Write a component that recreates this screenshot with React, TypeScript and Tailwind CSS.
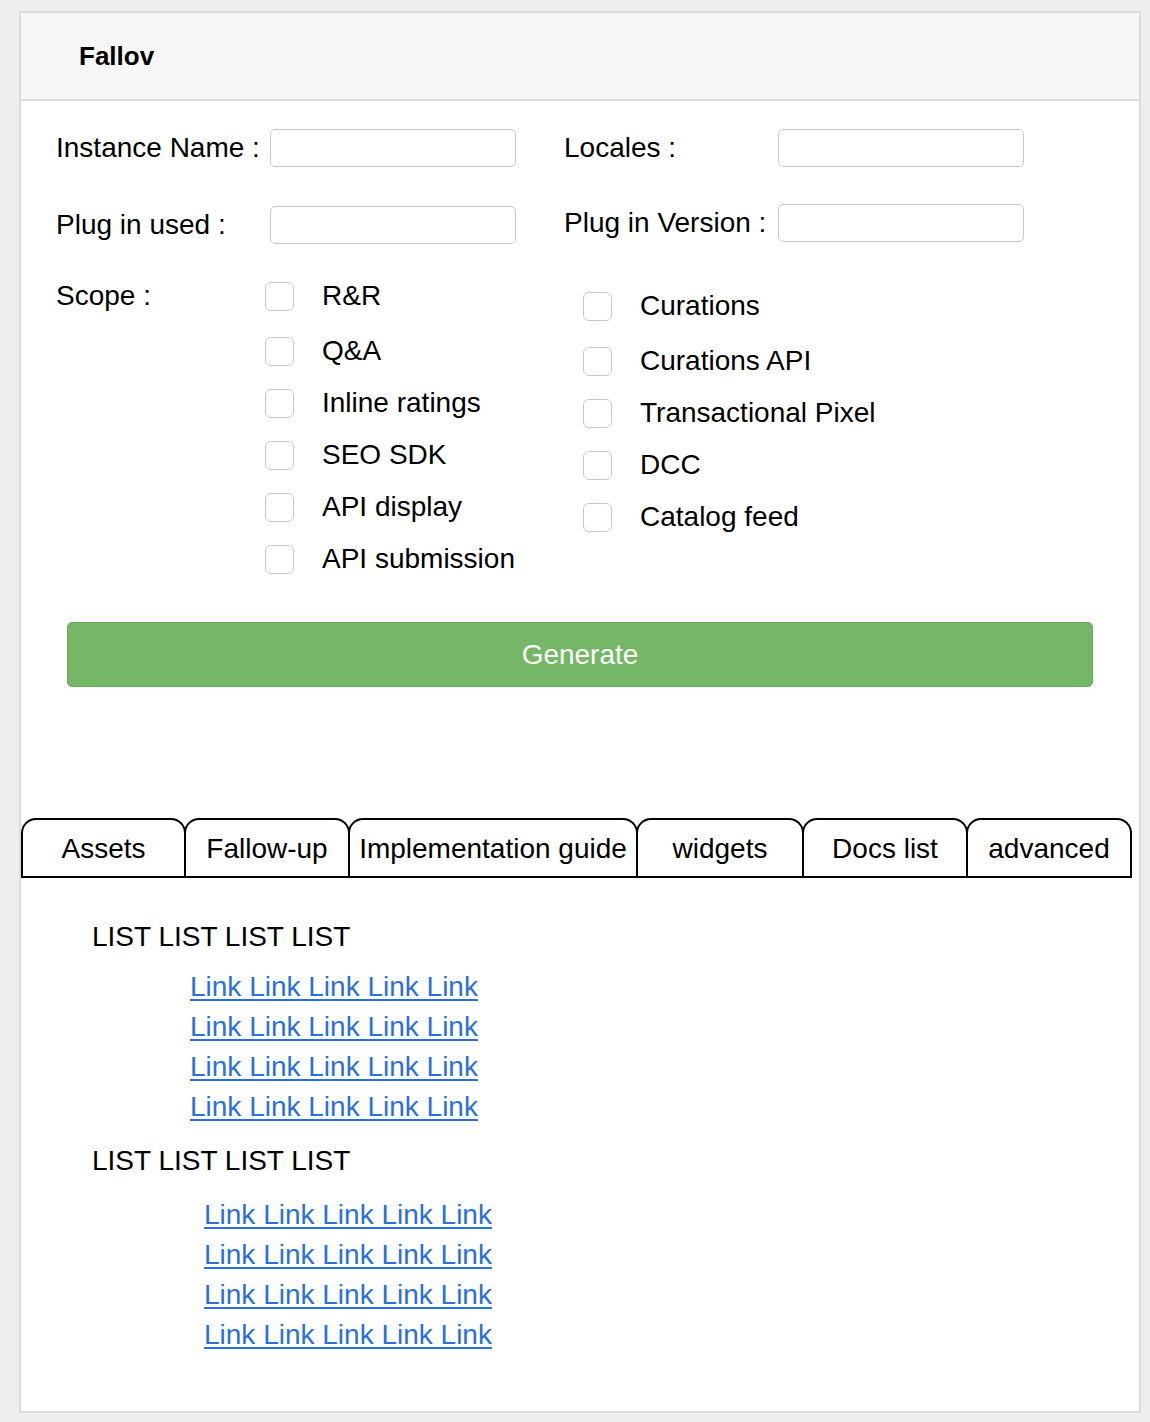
import React from 'react';

const leftScope = ['R&R', 'Q&A', 'Inline ratings', 'SEO SDK', 'API display', 'API submission'];
const rightScope = ['Curations', 'Curations API', 'Transactional Pixel', 'DCC', 'Catalog feed'];

const tabs = [
    { label: 'Assets', w: 'w-[165px]' },
    { label: 'Fallow-up', w: 'w-[166px]' },
    { label: 'Implementation guide', w: 'w-[290px]' },
    { label: 'widgets', w: 'w-[168px]' },
    { label: 'Docs list', w: 'w-[166px]' },
    { label: 'advanced', w: 'w-[166px]' },
];

const links = ['Link Link Link Link Link', 'Link Link Link Link Link', 'Link Link Link Link Link', 'Link Link Link Link Link'];

const Field: React.FC<{ label: string }> = ({ label }) => (
    <div className="flex items-center h-[38px]">
        <label className="w-[214px] whitespace-nowrap leading-none">{label}</label>
        <input type="text" className="w-[246px] h-[38px] border border-[#c8c8c8] rounded-[5px] bg-white outline-none" />
    </div>
);

const Check: React.FC<{ label: string; first?: boolean }> = ({ label, first }) => (
    <label className={`flex items-center h-[52px] ${first ? 'mb-[3px]' : ''}`}>
        <input type="checkbox" className="appearance-none w-[29px] h-[29px] border border-[#c8c8c8] rounded-[6px] bg-white shrink-0" />
        <span className="ml-[28px] whitespace-nowrap leading-none">{label}</span>
    </label>
);

const LinkList: React.FC<{ indent: string }> = ({ indent }) => (
    <ul className={`flex flex-col ${indent}`}>
        {links.map((l, i) => (
            <li key={i} className="h-[40px] leading-[40px]">
                <a href="#" className="text-[#2b6fdb] underline underline-offset-[3px]">{l}</a>
            </li>
        ))}
    </ul>
);

const App: React.FC = () => {
    return (
        <div className="min-h-screen bg-[#eeeeee] pt-[11px] pl-[19px] font-['Liberation_Sans',Arial,Helvetica,sans-serif] text-black text-[28px]">
            <div className="w-[1122px] h-[1402px] bg-white border-2 border-[#dcdcdc] flex flex-col">
                <header className="h-[88px] bg-[#f6f6f6] border-b-2 border-[#e0e0e0] flex items-center pl-[58px]">
                    <h1 className="text-[26px] font-bold leading-none">Fallov</h1>
                </header>

                <main className="pl-[35px] pt-[28px]">
                    <div className="flex">
                        <div className="flex flex-col w-[460px]">
                            <Field label="Instance Name :" />
                            <div className="mt-[39px]"><Field label="Plug in used :" /></div>
                        </div>
                        <div className="flex flex-col ml-[48px]">
                            <Field label="Locales :" />
                            <div className="mt-[37px]"><Field label="Plug in Version :" /></div>
                        </div>
                    </div>

                    <div className="flex mt-[26px]">
                        <div className="w-[209px] h-[52px] flex items-center leading-none">Scope :</div>
                        <div className="w-[318px] flex flex-col">
                            {leftScope.map((s, i) => <Check key={s} label={s} first={i === 0} />)}
                        </div>
                        <div className="flex flex-col mt-[10px]">
                            {rightScope.map((s, i) => <Check key={s} label={s} first={i === 0} />)}
                        </div>
                    </div>

                    <button className="mt-[37px] ml-[11px] w-[1026px] h-[65px] bg-[#75b667] border border-[#68ab5a] rounded-[5px] text-white text-[28px] leading-none">
                        Generate
                    </button>
                </main>

                <nav className="mt-[131px] w-[1111px] flex items-end border-b-2 border-black">
                    {tabs.map((t, i) => (
                        <div
                            key={t.label}
                            className={`${t.w} h-[58px] pt-[2px] border-2 border-b-0 border-black rounded-t-[15px] flex items-center justify-center whitespace-nowrap leading-none ${i > 0 ? '-ml-[2px]' : ''}`}
                        >
                            {t.label}
                        </div>
                    ))}
                </nav>

                <section className="pl-[71px] pt-[39px]">
                    <h2 className="h-[40px] leading-[40px]">LIST LIST LIST LIST</h2>
                    <div className="mt-[10px]"><LinkList indent="ml-[98px]" /></div>
                    <h2 className="mt-[14px] h-[40px] leading-[40px]">LIST LIST LIST LIST</h2>
                    <div className="mt-[14px]"><LinkList indent="ml-[112px]" /></div>
                </section>
            </div>
        </div>
    );
};

export default App;
